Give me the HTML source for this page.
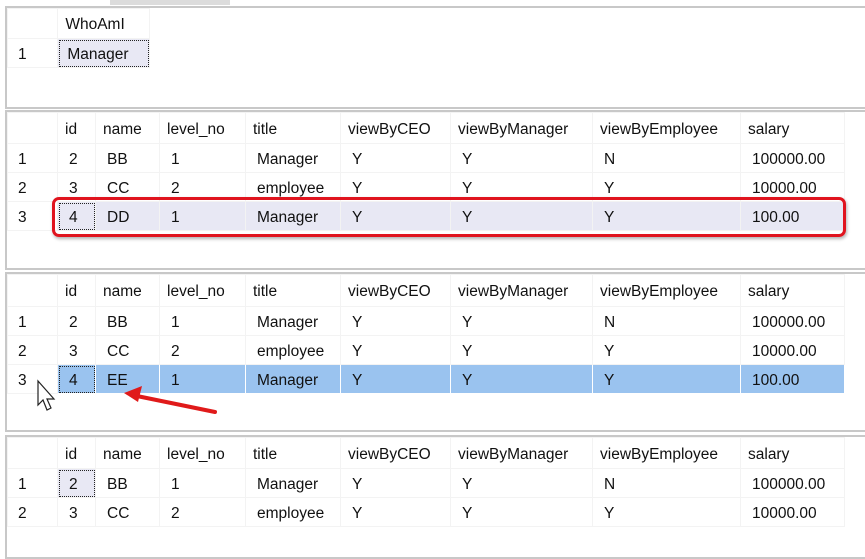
<!DOCTYPE html>
<html><head><style>
body{margin:0;width:865px;height:548px;background:#fff;position:relative;overflow:hidden;font-family:"Liberation Sans",sans-serif;font-size:15.5px;color:#111}
.p{position:absolute;left:5px;width:870px;border:2px solid #c8c8c8;border-right:none;background:#fff}
table{border-collapse:collapse;table-layout:fixed;position:absolute;left:0;top:0}
td{height:28px;border:1px solid #f3f3f3;padding:3px 0 0 7px;white-space:nowrap;overflow:hidden;box-sizing:border-box}
tr.h td{padding-left:7px}
tr.d td{padding-left:11px}
tr.d td:first-child,tr.h td:first-child{padding-left:10px}
.sel td{background:#e8e8f4}
.blue td{background:#9ac3ef;border-color:#fff}
.blue td:first-child{background:#fff;border-color:#f3f3f3}
.foc{outline:1px dotted #222;outline-offset:-2px}
</style></head><body>
<div style="position:absolute;left:110px;top:0;width:120px;height:5px;background:#dcdcdc"></div>
<div class="p" style="top:6px;height:99px">
<table style="width:143px"><colgroup><col style="width:50px"><col style="width:91px"></colgroup>
<tr class="h" style="height:30px"><td></td><td>WhoAmI</td></tr>
<tr class="d" style="height:29px"><td>1</td><td class="foc" style="background:#e8e8f4;padding-left:9px">Manager</td></tr>
</table></div>

<div class="p" style="top:110px;height:156px">
<table style="width:837px"><colgroup><col style="width:50px"><col style="width:38px"><col style="width:64px"><col style="width:86px"><col style="width:95px"><col style="width:110px"><col style="width:142px"><col style="width:148px"><col style="width:104px"></colgroup>
<tr class="h" style="height:31px"><td></td><td>id</td><td>name</td><td>level_no</td><td>title</td><td>viewByCEO</td><td>viewByManager</td><td>viewByEmployee</td><td>salary</td></tr>
<tr class="d" style="height:29px"><td>1</td><td>2</td><td>BB</td><td>1</td><td>Manager</td><td>Y</td><td>Y</td><td>N</td><td>100000.00</td></tr>
<tr class="d" style="height:29px"><td>2</td><td>3</td><td>CC</td><td>2</td><td>employee</td><td>Y</td><td>Y</td><td>Y</td><td>10000.00</td></tr>
<tr class="d sel" style="height:29px"><td style="background:#fff">3</td><td class="foc">4</td><td>DD</td><td>1</td><td>Manager</td><td>Y</td><td>Y</td><td>Y</td><td>100.00</td></tr>
</table></div>
<div style="position:absolute;left:52px;top:197px;width:788px;height:34px;border:3px solid #e0141e;border-radius:7px;box-shadow:1px 2px 3px rgba(0,0,0,.3)"></div>

<div class="p" style="top:272px;height:156px">
<table style="width:837px"><colgroup><col style="width:50px"><col style="width:38px"><col style="width:64px"><col style="width:86px"><col style="width:95px"><col style="width:110px"><col style="width:142px"><col style="width:148px"><col style="width:104px"></colgroup>
<tr class="h" style="height:32px"><td></td><td>id</td><td>name</td><td>level_no</td><td>title</td><td>viewByCEO</td><td>viewByManager</td><td>viewByEmployee</td><td>salary</td></tr>
<tr class="d" style="height:29px"><td>1</td><td>2</td><td>BB</td><td>1</td><td>Manager</td><td>Y</td><td>Y</td><td>N</td><td>100000.00</td></tr>
<tr class="d" style="height:29px"><td>2</td><td>3</td><td>CC</td><td>2</td><td>employee</td><td>Y</td><td>Y</td><td>Y</td><td>10000.00</td></tr>
<tr class="d blue" style="height:29px"><td>3</td><td class="foc">4</td><td>EE</td><td>1</td><td>Manager</td><td>Y</td><td>Y</td><td>Y</td><td>100.00</td></tr>
</table></div>

<div class="p" style="top:435px;height:120px">
<table style="width:837px"><colgroup><col style="width:50px"><col style="width:38px"><col style="width:64px"><col style="width:86px"><col style="width:95px"><col style="width:110px"><col style="width:142px"><col style="width:148px"><col style="width:104px"></colgroup>
<tr class="h" style="height:31px"><td></td><td>id</td><td>name</td><td>level_no</td><td>title</td><td>viewByCEO</td><td>viewByManager</td><td>viewByEmployee</td><td>salary</td></tr>
<tr class="d" style="height:29px"><td>1</td><td class="foc" style="background:#e8e8f4">2</td><td>BB</td><td>1</td><td>Manager</td><td>Y</td><td>Y</td><td>N</td><td>100000.00</td></tr>
<tr class="d" style="height:29px"><td>2</td><td>3</td><td>CC</td><td>2</td><td>employee</td><td>Y</td><td>Y</td><td>Y</td><td>10000.00</td></tr>
</table></div>

<svg style="position:absolute;left:0;top:0" width="865" height="548">
<path d="M215 412 L132 395" stroke="#e01a1a" stroke-width="4" stroke-linecap="round" fill="none"/>
<path d="M124 393 L142 386 L138 402 Z" fill="#e01a1a"/>
<path d="M38 381 L38 405 L43 400 L47 410 L51 408 L47 399 L54 399 Z" fill="#fff" stroke="#222" stroke-width="1.2"/>
</svg>
</body></html>
